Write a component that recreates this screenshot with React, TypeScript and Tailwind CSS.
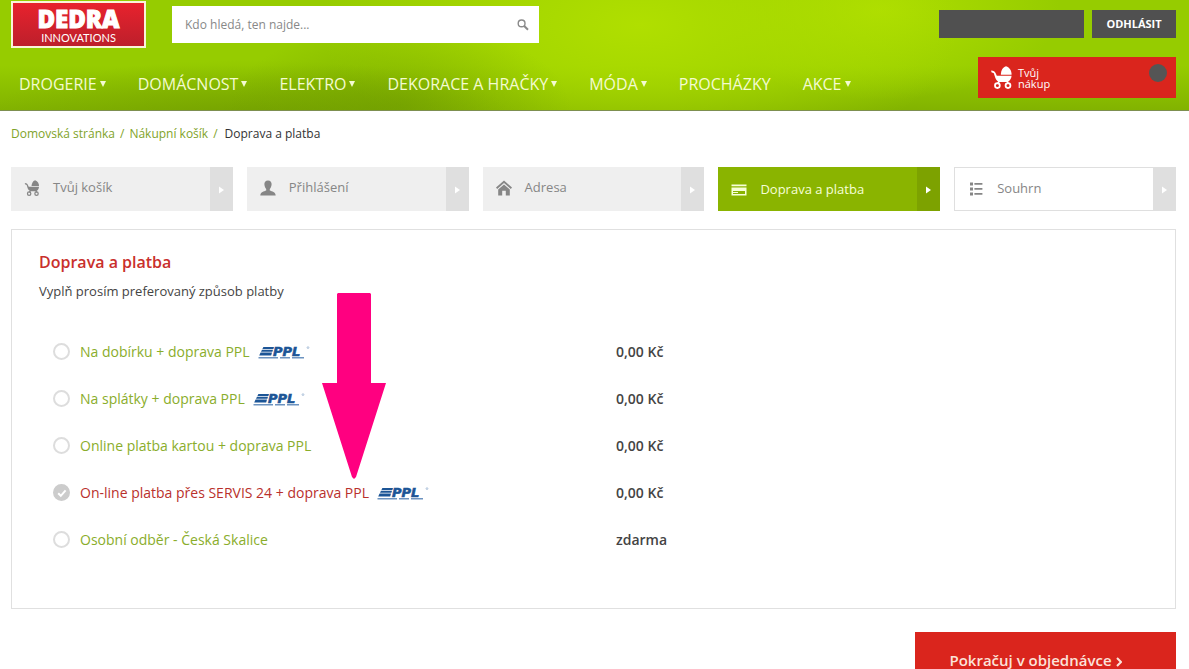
import { useState } from "react"
import type { ReactNode } from "react"

const menu = [
	{ id: 1, title: "DROGERIE", more: true },
	{ id: 2, title: "DOMÁCNOST", more: true },
	{ id: 3, title: "ELEKTRO", more: true },
	{ id: 4, title: "DEKORACE A HRAČKY", more: true },
	{ id: 5, title: "MÓDA", more: true },
	{ id: 6, title: "PROCHÁZKY", more: false },
	{ id: 7, title: "AKCE", more: true },
]

const payments = [
	{ id: "dobirka", title: "Na dobírku + doprava PPL", ppl: true, price: "0,00 Kč" },
	{ id: "splatky", title: "Na splátky + doprava PPL", ppl: true, price: "0,00 Kč" },
	{ id: "karta", title: "Online platba kartou + doprava PPL", ppl: false, price: "0,00 Kč" },
	{ id: "servis24", title: "On-line platba přes SERVIS 24 + doprava PPL", ppl: true, price: "0,00 Kč" },
	{ id: "osobni", title: "Osobní odběr - Česká Skalice", ppl: false, price: "zdarma" },
]

function Stroller({ className }: { className: string }) {
	return (
		<svg viewBox="0 0 21 23" className={className} fill="currentColor" aria-hidden="true">
			<path d="M9.8 8.8 C10 4.6 11.6 1.2 15 0.2 C18.8 1.4 20.6 4.6 20.6 8.8 Z" />
			<path d="M0.2 4.4 C2.6 4.6 4 5.4 4.8 7.4 L5.8 9.8 H20.6 C20.4 12.8 18.8 15 16.6 16 H8 C5.4 15 4.4 12.6 3.6 9.8 L2.8 7.2 L0.4 6.2 Z" />
			<path d="M8.4 15 L6.4 18 M16 15 L17.4 18" fill="none" stroke="currentColor" strokeWidth="1.6" />
			<circle cx="6.4" cy="19.6" r="2.4" fill="none" stroke="currentColor" strokeWidth="1.8" />
			<circle cx="17" cy="19.6" r="2.4" fill="none" stroke="currentColor" strokeWidth="1.8" />
		</svg>
	)
}

function Person() {
	return (
		<svg viewBox="0 0 16 16" className="w-4 h-4" fill="currentColor" aria-hidden="true">
			<path d="M8 0.5 C10.6 0.5 11.8 2.2 11.6 4.6 C11.4 7 10.6 8.2 9.8 9 V10.6 C12 11.6 15.5 12 15.7 15.4 H0.3 C0.5 12 4 11.6 6.2 10.6 V9 C5.4 8.2 4.6 7 4.4 4.6 C4.2 2.2 5.4 0.5 8 0.5 Z" />
		</svg>
	)
}

function House() {
	return (
		<svg viewBox="0 0 16 16" className="w-4 h-4" fill="currentColor" aria-hidden="true">
			<path d="M8 0.6 L16 7.6 L14.8 9 L8 3.1 L1.2 9 L0 7.6 Z" />
			<path d="M8 4.5 L13.8 9.5 V15.4 H9.8 V10.8 H6.2 V15.4 H2.2 V9.5 Z" />
		</svg>
	)
}

function Card() {
	return (
		<svg viewBox="0 0 16 16" className="w-4 h-4" aria-hidden="true">
			<path
				d="M0.5 2.5 H15.5 V4.2 H0.5 Z M0.5 5.6 H15.5 V13.5 H0.5 Z M2 9 V12 H14 V9 Z"
				fill="currentColor"
				fillRule="evenodd"
			/>
			<rect x="2" y="10" width="5" height="1" fill="currentColor" />
		</svg>
	)
}

function List() {
	return (
		<svg viewBox="0 0 16 16" className="w-4 h-4" fill="currentColor" aria-hidden="true">
			<path d="M2 1.5 h3 v3 h-3 Z M2 6.5 h3 v3 h-3 Z M2 11.5 h3 v3 h-3 Z" />
			<path d="M6.4 2 h8 v1.8 h-8 Z M6.4 7 h8 v1.8 h-8 Z M6.4 12 h8 v1.8 h-8 Z" />
		</svg>
	)
}

function Ppl() {
	return (
		<svg viewBox="0 0 52 20" className="w-[52px] h-5" role="img" aria-label="PPL">
			<path d="M5.4 5 H16 L15.4 7 H4.4 Z M4 7.8 H15 L14.4 9.8 H3 Z M2.6 10.6 H14 L13.2 13.6 H1.2 Z" fill="#1c5596" />
			<text
				x="15"
				y="13.6"
				className="font-['DejaVu_Sans'] text-[13px] font-bold italic"
				fill="#1c5596"
				stroke="#1c5596"
				strokeWidth="0.6"
			>
				PPL
			</text>
			<path d="M0.5 15.8 H20 M22 15.8 H32 M34 15.8 H46" stroke="#6d93c0" strokeWidth="1.4" />
			<circle cx="50" cy="5.6" r="0.9" fill="none" stroke="#7f9fc4" strokeWidth="0.6" />
		</svg>
	)
}

type StepProps = {
	icon: ReactNode
	title: string
	box: string
	body: string
	side: string
}

function Step({ icon, title, box, body, side }: StepProps) {
	return (
		<li className={`flex h-11 ${box}`}>
			<a href="#" className={`flex flex-1 items-center gap-[13px] pl-[13px] text-[13px] ${body}`}>
				{icon}
				{title}
			</a>
			<span className={`flex w-[23px] items-center justify-center pt-0.5 text-white ${side}`}>
				<svg viewBox="0 0 5 8" className="w-[5px] h-2" fill="currentColor" aria-hidden="true">
					<path d="M0 0.5 L5 4 L0 7.5 Z" />
				</svg>
			</span>
		</li>
	)
}

function Header() {
	return (
		<header className="h-[111px] border-b border-[#7d8f50] bg-[#96cc00] bg-[radial-gradient(ellipse_170px_80px_at_400px_105px,#6a960080,transparent),radial-gradient(ellipse_260px_55px_at_250px_115px,#6a940080,transparent),radial-gradient(ellipse_320px_150px_at_640px_25px,#b0df00,transparent),radial-gradient(ellipse_180px_90px_at_880px_10px,#aede00,transparent),linear-gradient(to_bottom,transparent_60%,#6e9a0080)] pl-[11px] pr-[13px]">
			<div className="flex justify-between">
				<div className="flex gap-[26px]">
					<a
						href="#"
						className="mt-px flex h-[47px] w-[135px] flex-col items-center border-2 border-[#fbf3d8] bg-linear-to-b from-[#e8222d] to-[#bd1f2b] pt-1 text-white"
					>
						<span className="text-[24px] leading-[24px] font-extrabold [-webkit-text-stroke:1px_white]">DEDRA</span>
						<span className="font-[Lato] text-[11px] leading-[14px]">INNOVATIONS</span>
					</a>
					<form className="mt-1.5 flex h-[37px] w-[367px] items-center bg-white pr-[10px] pl-[13px]">
						<input
							type="text"
							aria-label="Hledat"
							placeholder="Kdo hledá, ten najde..."
							className="min-w-0 flex-1 text-[12px] outline-none placeholder:text-[#888]"
						/>
						<button type="button" aria-label="Hledat">
							<svg viewBox="0 0 12 12" className="w-3 h-3" fill="none" stroke="#8a8a8a" aria-hidden="true">
								<circle cx="4.6" cy="4.4" r="3.4" strokeWidth="1.4" />
								<path d="M7.2 7 L11 10.8" strokeWidth="2" />
							</svg>
						</button>
					</form>
				</div>
				<div className="mt-[10px] flex h-7 gap-2">
					<div className="w-[145px] bg-[#505050]"></div>
					<button className="w-[84px] bg-[#505050] text-[11px] font-bold text-white">ODHLÁSIT</button>
				</div>
			</div>
			<div className="mt-[9px] flex items-start justify-between">
				<nav className="mt-[15px] flex gap-8 pl-2 text-[16px] leading-6 text-[#f4fbd0]">
					{menu.map((item) => (
						<a key={item.id} href="#" className="flex items-center gap-[3px] whitespace-nowrap">
							{item.title}
							{item.more && (
								<svg viewBox="0 0 6 6" className="w-1.5 h-1.5" fill="currentColor" aria-hidden="true">
									<path d="M0 0 H6 L3 6 Z" />
								</svg>
							)}
						</a>
					))}
				</nav>
				<a href="#" className="flex h-[41px] w-[198px] bg-[#da251d] pl-[13px] text-white">
					<Stroller className="mt-[9px] w-[21px] h-[23px]" />
					<span className="mt-[10px] ml-1.5 text-[11px] leading-[11px]">
						Tvůj
						<br />
						nákup
					</span>
					<span className="mt-[7px] mr-[9px] ml-auto h-[18px] w-[18px] rounded-full bg-[#555]"></span>
				</a>
			</div>
		</header>
	)
}

function App() {
	const [selected, setSelected] = useState("servis24")

	return (
		<div className="bg-white font-['Open_Sans',sans-serif] text-[#444]">
			<Header />
			<main className="pl-[11px] pr-[13px]">
				<nav className="mt-[13px] flex gap-[5px] text-[12px] leading-5 text-[#7fa32a]">
					<a href="#">Domovská stránka</a>
					<span>/</span>
					<a href="#">Nákupní košík</a>
					<span>/</span>
					<span className="ml-0.5 text-[#333]">Doprava a platba</span>
				</nav>

				<ol className="mt-[23px] grid grid-cols-5 gap-[14px]">
					<Step
						icon={<Stroller className="w-4 h-4" />}
						title="Tvůj košík"
						box="bg-[#efefef]"
						body="pb-0.5 text-[#868686]"
						side="bg-[#dfdfdf]"
					/>
					<Step icon={<Person />} title="Přihlášení" box="bg-[#efefef]" body="pb-0.5 text-[#868686]" side="bg-[#dfdfdf]" />
					<Step icon={<House />} title="Adresa" box="bg-[#efefef]" body="pb-0.5 text-[#868686]" side="bg-[#dfdfdf]" />
					<Step icon={<Card />} title="Doprava a platba" box="bg-[#8ab400]" body="pt-0.5 text-[#f6ffd8]" side="bg-[#7da200]" />
					<Step
						icon={<List />}
						title="Souhrn"
						box="border border-r-0 border-[#dfdfdf]"
						body="text-[#868686]"
						side="bg-[#dfdfdf]"
					/>
				</ol>

				<section className="relative mt-[18px] border border-[#e0e0e0] pt-5 pb-[45px] pl-[27px]">
					<h1 className="text-[16px] leading-6 font-semibold text-[#c9302c]">Doprava a platba</h1>
					<p className="mt-[7px] text-[13px] leading-5">Vyplň prosím preferovaný způsob platby</p>

					<ul className="mt-[27px] pl-[14px]">
						{payments.map((item) => (
							<li key={item.id} className="grid h-[47px] grid-cols-[563px_1fr] items-center text-[14px]">
								<label
									className={
										selected === item.id
											? "flex items-center gap-[10px] text-[#b9302c]"
											: "flex items-center gap-[10px] text-[#8aad2b]"
									}
								>
									<span className="grid h-[17px] w-[17px] place-items-center">
										<input
											type="radio"
											name="payment"
											checked={selected === item.id}
											onChange={() => setSelected(item.id)}
											className="col-start-1 row-start-1 h-[17px] w-[17px] appearance-none rounded-full border-2 border-[#ddd] checked:border-[#ccc] checked:bg-[#ccc]"
										/>
										{selected === item.id && (
											<svg
												viewBox="0 0 10 10"
												className="col-start-1 row-start-1 h-[10px] w-[10px]"
												fill="none"
												stroke="#fff"
												strokeWidth="2"
												aria-hidden="true"
											>
												<path d="M1.2 5.2 L3.8 7.8 L8.6 2.4" />
											</svg>
										)}
									</span>
									<span className="flex items-center gap-2">
										{item.title}
										{item.ppl && <Ppl />}
									</span>
								</label>
								<span className="font-semibold text-[#444]">{item.price}</span>
							</li>
						))}
					</ul>

					<svg
						viewBox="0 0 64 186"
						className="pointer-events-none absolute top-[63px] left-[310px] h-[186px] w-16"
						fill="#ff0080"
						aria-hidden="true"
					>
						<path d="M16 0 H48 L49 1 V90 H64 L34 184 L32 186 L30 184 L0 90 H15 V1 Z" />
					</svg>
				</section>

				<div className="mt-[23px] flex justify-end">
					<button className="h-14 w-[261px] bg-[#da251d] pr-5 text-[15px] font-semibold text-[#fbe3da]">
						<span className="flex items-center justify-center gap-1">
							Pokračuj v objednávce
							<svg viewBox="0 0 6 10" className="mt-1 w-1.5 h-2.5" fill="none" stroke="currentColor" strokeWidth="2" aria-hidden="true">
								<path d="M1 1 L5 5 L1 9" />
							</svg>
						</span>
					</button>
				</div>
			</main>
		</div>
	)
}

export default App
